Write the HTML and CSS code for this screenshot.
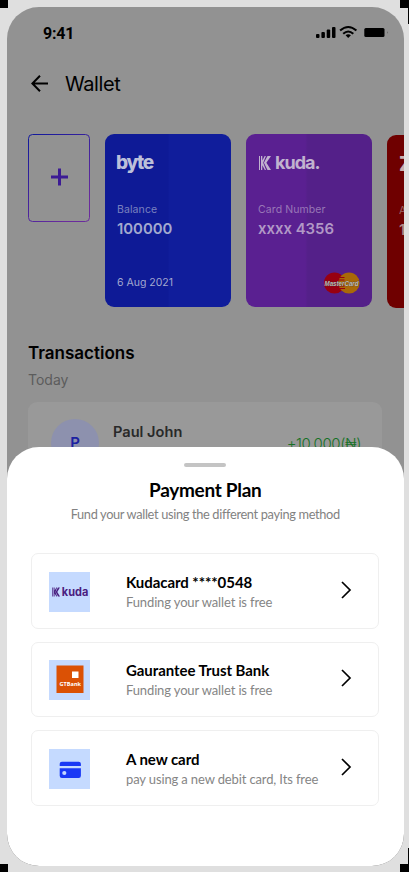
FILE: index.html
```html
<!DOCTYPE html>
<html lang="en">
<head>
<meta charset="utf-8">
<title>Wallet</title>
<link rel="stylesheet" href="styles.css">
</head>
<body>
<i class="corner tl"></i><i class="corner tr"></i><i class="corner tr-edge"></i>
<i class="corner bl"></i><i class="corner br"></i><i class="corner br-edge"></i>
<main class="phone">
  <div class="status">
    <span class="time">9:41</span>
    <svg class="status-icons" width="74" height="16" viewBox="0 0 74 16">
      <rect x="1" y="9" width="3.5" height="4" rx="1"/><rect x="6.4" y="7" width="3.5" height="6" rx="1"/><rect x="11.7" y="4.5" width="3.5" height="8.5" rx="1"/><rect x="17" y="2" width="3.5" height="11" rx="1"/>
      <g fill="none" stroke="#000" stroke-width="2.1"><path d="M25.1 5.5Q33.2-1.5 41.400 5.500"/><path d="M28.200 8.800Q33.200 4.200 38.300 8.800"/></g>
      <path d="M30.600 10.300Q33.200 8.200 35.900 10.300L33.200 13z"/>
      <rect x="49.300" y="3" width="20.200" height="9" rx="1.500"/><path d="M72 6.200q1.500 1.300 0 2.600z" fill="#555"/>
    </svg>
  </div>
  <header class="bar">
    <svg width="18" height="18" viewBox="0 0 18 18" fill="none" stroke="#000" stroke-width="2"><path d="M17 8.500H2M9 .8L1.400 8.500l7.600 7.700"/></svg>
    <h1>Wallet</h1>
  </header>
  <section class="cards">
    <button class="add" aria-label="Add card">
      <svg width="62" height="88" viewBox="0 0 62 88" fill="none">
        <defs><linearGradient id="edge" x1="0" y1="0" x2=".6" y2="1"><stop stop-color="#10199c"/><stop offset="1" stop-color="#6a2b9d"/></linearGradient></defs>
        <rect x=".5" y=".5" width="61" height="87" rx="4" stroke="url(#edge)"/>
        <path d="M31.500 34.500v17M23 43h17" stroke="#3c1b94" stroke-width="3"/>
      </svg>
    </button>
    <article class="card blue">
      <div class="brand byte">byte</div>
      <div class="label">Balance</div>
      <div class="value">100000</div>
      <div class="date">6 Aug 2021</div>
    </article>
    <article class="card purple">
      <div class="brand kuda">
        <svg width="12" height="14" viewBox="0 0 12 14"><path d="M0 0h1v14H0zM2 0h1.300v4.500L5.700 0h1.200L4.200 6.800 7 14H5.800L3.300 9.200V14H2zM8.500 0H12L7.400 6.800 12 14H8.500L4.900 6.800z" fill="#c1b3cf"/></svg>
        <span>kuda.</span>
      </div>
      <div class="label">Card Number</div>
      <div class="value">xxxx 4356</div>
      <svg class="master" width="38" height="22" viewBox="0 0 38 22">
        <circle cx="11.500" cy="11" r="10.600" fill="#980011"/><circle cx="26" cy="11" r="10.600" fill="#a96908"/>
        <path d="M15.500 5.500h6M15.500 8h6M15.500 14h6M16 16.500h6" stroke="#980011" stroke-width="1"/>
        <text x="1.500" y="13.800" textLength="34" lengthAdjust="spacingAndGlyphs">MasterCard</text>
      </svg>
    </article>
    <article class="card red">
      <div class="brand zenith">Z</div>
      <div class="label">A</div>
      <div class="value">1</div>
    </article>
  </section>
  <section class="transactions">
    <h2>Transactions</h2>
    <p class="day">Today</p>
    <div class="entry">
      <div class="avatar">P</div>
      <div class="person">Paul John</div>
      <div class="amount">+10,000(₦)</div>
    </div>
  </section>
  <section class="sheet">
    <div class="handle"></div>
    <h2>Payment Plan</h2>
    <p class="intro">Fund your wallet using the different paying method</p>
    <div class="plans">
      <div class="plan">
        <div class="thumb">
          <svg width="41" height="40" viewBox="0 0 41 40"><path d="M3 15.500h.7v9H3zM4.600 15.500h1v3l1.700-3h.8L6.500 20l1.700 4.500h-.8l-1.800-3v3h-1zM8.900 15.500h2L8.300 20l2.700 4.500H9L6.700 20z" fill="#4a2080"/><text class="kuda-mini" x="12.800" y="24" textLength="26.500" lengthAdjust="spacingAndGlyphs">kuda</text></svg>
        </div>
        <div class="copy"><h3>Kudacard ****0548</h3><p>Funding your wallet is free</p></div>
        <svg class="chev" width="12" height="18" viewBox="0 0 12 18"><path d="M2 1l8 8-8 8"/></svg>
      </div>
      <div class="plan second">
        <div class="thumb">
          <svg width="41" height="40" viewBox="0 0 41 40"><path d="M7.500 5.500h27V33h-27z" fill="#db5105"/><path d="M23 11.500h6.500V18H23z" fill="#fff"/><text class="gt-mini" x="10.500" y="26" textLength="21.500" lengthAdjust="spacingAndGlyphs">GTBank</text></svg>
        </div>
        <div class="copy"><h3>Gaurantee Trust Bank</h3><p>Funding your wallet is free</p></div>
        <svg class="chev" width="12" height="18" viewBox="0 0 12 18"><path d="M2 1l8 8-8 8"/></svg>
      </div>
      <div class="plan third">
        <div class="thumb">
          <svg width="41" height="40" viewBox="0 0 41 40"><path d="M10.700 17v-2a2.200 2.200 0 0 1 2.200-2.200h16.800a2.200 2.200 0 0 1 2.200 2.200v2zM10.700 19.200h21.200v7.500a2.200 2.200 0 0 1-2.200 2.200H12.900a2.200 2.200 0 0 1-2.200-2.200z" fill="#1a39f5"/><circle cx="15.300" cy="24" r="2.100" fill="#c5d7ff"/></svg>
        </div>
        <div class="copy"><h3>A new card</h3><p>pay using a new debit card, Its free</p></div>
        <svg class="chev" width="12" height="18" viewBox="0 0 12 18"><path d="M2 1l8 8-8 8"/></svg>
      </div>
    </div>
  </section>
</main>
</body>
</html>
```
FILE: styles.css
```css
* { box-sizing: border-box; }
h1, h2, h3, p { margin: 0; }
body { margin: 0; width: 409px; height: 872px; padding: 7px 0 0 7px; background: #dfdfdf; position: relative; overflow: hidden; font-family: Inter, sans-serif; }
svg { display: block; flex: none; }
.corner { position: absolute; background: #000; width: 8px; height: 8px; }
.tl { left: 0; top: 0; }
.tr { right: 0; top: 0; width: 9px; }
.tr-edge { right: 0; top: 8px; width: 1px; height: 16px; }
.bl { left: 0; bottom: 0; }
.br { right: 0; bottom: 0; width: 9px; }
.br-edge { right: 0; bottom: 8px; width: 1px; height: 16px; }
.phone { position: relative; width: 396.5px; height: 859px; border-radius: 32px; background: #929292; overflow: hidden; }
.status { display: flex; justify-content: space-between; height: 63.5px; padding: 17px 15px 0 36px; }
.time { font: 700 16px/19px Roboto, sans-serif; letter-spacing: -.2px; }
.status-icons { margin-top: 1px; }
.bar { display: flex; align-items: center; height: 26px; padding-left: 24px; gap: 16px; }
.bar h1 { font-size: 20px; font-weight: 400; line-height: 26px; letter-spacing: -.4px; }
.cards { display: flex; align-items: flex-start; gap: 15px; padding: 37.5px 0 0 21px; height: 205px; width: 520px; }
.add { padding: 0; border: 0; background: none; width: 62px; height: 88px; }
.card { width: 126px; height: 173px; border-radius: 9px; padding: 19px 12px 0; flex: none; display: flex; flex-direction: column; position: relative; }
.blue { background: linear-gradient(90deg, #0e1a96 50%, #101d9b 51%); color: #a3a9cf; }
.purple { background: linear-gradient(90deg, #5a2091 47%, #542089 49%); color: #b198c6; }
.red { background: #6f0000; margin-top: 1px; color: #ae8989; }
.brand { height: 23px; line-height: 20px; }
.byte { font-size: 19px; font-weight: 800; letter-spacing: -1.4px; color: #bcc0da; margin-left: -1px; }
.kuda { display: flex; align-items: center; gap: 4px; font: 700 18px/20px Inter, sans-serif; letter-spacing: -1px; color: #c1b3cf; margin-left: 1px; height: 20px; margin-bottom: 3px; }
.zenith { font: 800 20px/20px Inter, sans-serif; color: #c9b0b0; }
.label { margin-top: 27px; font-size: 10.500px; line-height: 14px; opacity: .72; letter-spacing: .1px; white-space: nowrap; }
.value { font-size: 14.900px; line-height: 18px; margin-top: 2.5px; font-weight: 600; white-space: nowrap; }
.date { font-size: 10.500px; line-height: 14px; margin-top: 38.5px; }
.master { position: absolute; right: 11px; bottom: 13.500px; }
.master text { font: italic 700 8px "Liberation Sans", sans-serif; fill: #bbb; stroke: #333; stroke-width: .4px; paint-order: stroke; }
.transactions { padding: 41.5px 21px 0; }
.transactions h2 { font-size: 17px; font-weight: 600; line-height: 20px; }
.day { font-size: 14px; line-height: 18px; margin-top: 8px; color: #5c5c5c; }
.entry { display: flex; height: 84px; margin-top: 12.5px; border-radius: 9px; background: #999; padding: 0 21px 0 23px; width: 354px; }
.avatar { width: 48px; height: 48px; margin-top: 17px; border-radius: 50%; background: #8d91ae; color: #1b21a1; font-weight: 600; font-size: 15px; line-height: 48px; text-align: center; }
.person { margin: 20.5px 0 0 14px; font-size: 14.600px; line-height: 20px; font-weight: 600; color: #292929; flex: 1; }
.amount { margin-top: 32px; font-size: 15px; line-height: 20px; color: #167126; font-weight: 300; letter-spacing: -.4px; }
.sheet { position: absolute; left: 0; right: 0; top: 440px; bottom: 0; border-radius: 32px; background: #fff; font-family: Lato, sans-serif; text-align: center; padding-top: 16px; }
.handle { width: 42px; height: 4px; border-radius: 2px; background: #c4c4c4; margin: 0 auto; }
.sheet h2 { font-size: 19px; line-height: 24px; margin-top: 11px; font-weight: 700; letter-spacing: -.3px; }
.intro { font-size: 12.800px; line-height: 18px; margin-top: 3px; color: #828282; letter-spacing: -.34px; }
.plans { display: flex; flex-direction: column; gap: 13px; margin: 30px 24px 0; text-align: left; }
.plan { display: flex; width: 348px; height: 75.500px; border: 1px solid #efefef; border-radius: 7px; padding: 18px 26px 0 17px; }
.second { padding-top: 17px; }
.thumb { width: 41px; height: 40px; background: #c5daff; }
.third .thumb { margin-top: -.5px; }
.kuda-mini { font: 700 11.500px Inter, sans-serif; fill: #4a2080; }
.gt-mini { font: 700 6px "Open Sans", sans-serif; fill: #fff; }
.copy { flex: 1; margin-left: 36px; }
.second .copy { margin-top: .5px; }
.third .copy { margin-top: -.5px; }
.copy h3 { font-size: 15px; line-height: 20px; font-weight: 700; letter-spacing: -.06px; }
.copy p { font-size: 13px; line-height: 18px; margin-top: 1px; color: #858585; white-space: nowrap; letter-spacing: -.13px; }
.chev { margin-top: 9px; fill: none; stroke: #000; stroke-width: 1.700; }
```
